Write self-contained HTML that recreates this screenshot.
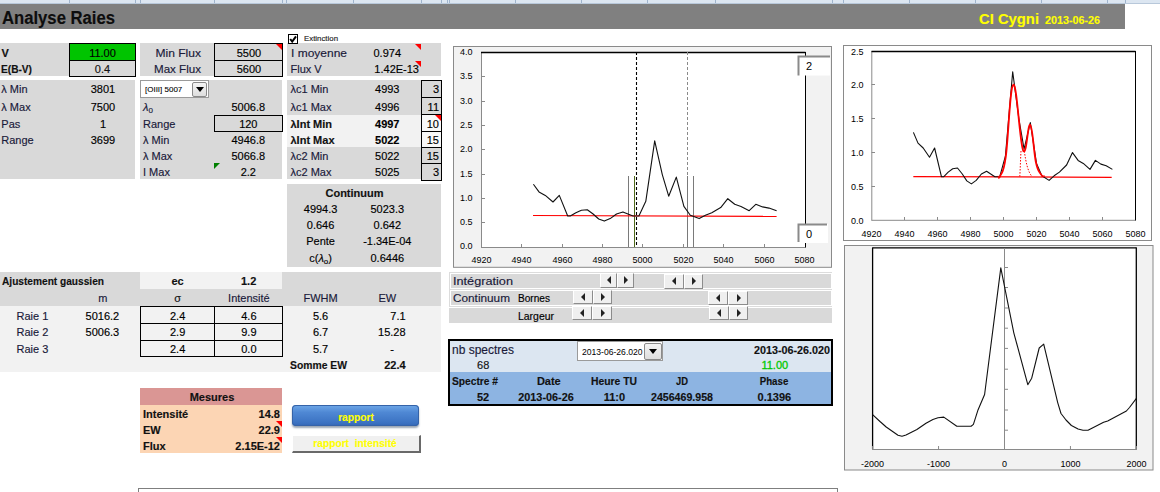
<!DOCTYPE html>
<html><head><meta charset="utf-8"><style>
html,body{margin:0;padding:0;}
body{width:1160px;height:492px;overflow:hidden;background:#fff;position:relative;font-family:"Liberation Sans",sans-serif;}
.a{position:absolute;}
.t{position:absolute;white-space:nowrap;line-height:1;-webkit-text-stroke:0.15px currentColor;}
</style></head><body>
<div class="a" style="left:0px;top:0px;width:1160px;height:4px;background:#dce6f1;"></div>
<div class="a" style="left:69px;top:0px;width:1px;height:4px;background:#9fb4cc;"></div>
<div class="a" style="left:135px;top:0px;width:1px;height:4px;background:#9fb4cc;"></div>
<div class="a" style="left:140px;top:0px;width:1px;height:4px;background:#9fb4cc;"></div>
<div class="a" style="left:214px;top:0px;width:1px;height:4px;background:#9fb4cc;"></div>
<div class="a" style="left:282px;top:0px;width:1px;height:4px;background:#9fb4cc;"></div>
<div class="a" style="left:286px;top:0px;width:1px;height:4px;background:#9fb4cc;"></div>
<div class="a" style="left:353px;top:0px;width:1px;height:4px;background:#9fb4cc;"></div>
<div class="a" style="left:421px;top:0px;width:1px;height:4px;background:#9fb4cc;"></div>
<div class="a" style="left:441px;top:0px;width:1px;height:4px;background:#9fb4cc;"></div>
<div class="a" style="left:447px;top:0px;width:1px;height:4px;background:#9fb4cc;"></div>
<div class="a" style="left:449px;top:0px;width:1px;height:4px;background:#9fb4cc;"></div>
<div class="a" style="left:515px;top:0px;width:1px;height:4px;background:#9fb4cc;"></div>
<div class="a" style="left:581px;top:0px;width:1px;height:4px;background:#9fb4cc;"></div>
<div class="a" style="left:647px;top:0px;width:1px;height:4px;background:#9fb4cc;"></div>
<div class="a" style="left:715px;top:0px;width:1px;height:4px;background:#9fb4cc;"></div>
<div class="a" style="left:832px;top:0px;width:1px;height:4px;background:#9fb4cc;"></div>
<div class="a" style="left:843px;top:0px;width:1px;height:4px;background:#9fb4cc;"></div>
<div class="a" style="left:909px;top:0px;width:1px;height:4px;background:#9fb4cc;"></div>
<div class="a" style="left:975px;top:0px;width:1px;height:4px;background:#9fb4cc;"></div>
<div class="a" style="left:1041px;top:0px;width:1px;height:4px;background:#9fb4cc;"></div>
<div class="a" style="left:1107px;top:0px;width:1px;height:4px;background:#9fb4cc;"></div>
<div class="a" style="left:1125px;top:0px;width:1px;height:4px;background:#9fb4cc;"></div>
<div class="a" style="left:0px;top:3px;width:1160px;height:1px;background:#b8c8da;"></div>
<div class="a" style="left:0px;top:4px;width:1125px;height:25px;background:#808080;"></div>
<div class="t" style="left:2.00px;top:9.16px;font-size:18px;font-weight:bold;color:#0d0d0d;transform:scaleX(0.9257);transform-origin:left top;">Analyse Raies</div>
<div class="t" style="left:978.50px;top:10.58px;font-size:15.5px;font-weight:bold;color:#ffff00;transform:scaleX(0.9545);transform-origin:left top;">CI Cygni</div>
<div class="t" style="left:1044.80px;top:14.69px;font-size:11px;font-weight:bold;color:#ffff00;transform:scaleX(0.9774);transform-origin:left top;">2013-06-26</div>
<div class="a" style="left:0px;top:43px;width:69px;height:33px;background:#d9d9d9;"></div>
<div class="t" style="left:1.50px;top:48.39px;font-size:11px;font-weight:bold;color:#111;">V</div>
<div class="t" style="left:1.20px;top:64.29px;font-size:11px;font-weight:bold;color:#111;transform:scaleX(0.9224);transform-origin:left top;">E(B-V)</div>
<div class="a" style="left:69px;top:43px;width:67px;height:18px;background:#00c400;box-shadow:inset 0 0 0 1px #000;"></div>
<div class="a" style="left:69px;top:60px;width:67px;height:17px;background:#d9d9d9;box-shadow:inset 0 0 0 1px #000;"></div>
<div class="t" style="left:-197.50px;width:600px;text-align:center;top:48.29px;font-size:11px;color:#000;">11.00</div>
<div class="t" style="left:-197.50px;width:600px;text-align:center;top:64.19px;font-size:11px;color:#111;">0.4</div>
<div class="a" style="left:140px;top:43px;width:143px;height:33px;background:#d9d9d9;"></div>
<div class="t" style="left:-399.20px;width:600px;text-align:right;top:48.29px;font-size:11px;color:#1a1a3a;transform:scaleX(1.0971);transform-origin:right top;">Min Flux</div>
<div class="t" style="left:-399.20px;width:600px;text-align:right;top:64.19px;font-size:11px;color:#1a1a3a;transform:scaleX(1.0534);transform-origin:right top;">Max Flux</div>
<div class="a" style="left:214px;top:43px;width:69px;height:18px;background:#d9d9d9;box-shadow:inset 0 0 0 1px #000;"></div>
<div class="a" style="left:214px;top:60px;width:69px;height:17px;background:#d9d9d9;box-shadow:inset 0 0 0 1px #000;"></div>
<div class="t" style="left:-51.10px;width:600px;text-align:center;top:48.29px;font-size:11px;color:#000;">5500</div>
<div class="t" style="left:-51.10px;width:600px;text-align:center;top:64.19px;font-size:11px;color:#000;">5600</div>
<div class="a" style="left:276px;top:44px;width:0;height:0;border-left:6px solid transparent;border-top:6px solid #ff0000;"></div>
<div class="a" style="left:287px;top:43px;width:154px;height:33px;background:#d9d9d9;"></div>
<div class="a" style="left:288px;top:34px;width:10px;height:10px;background:#fff;box-shadow:inset 0 0 0 1px #000;"></div>
<svg class="a" style="left:288px;top:34px" width="10" height="10"><path d="M2.2 5.0 L4.2 7.6 L8 2.4" stroke="#000" stroke-width="2" fill="none"/></svg>
<div class="t" style="left:304.00px;top:35.03px;font-size:8px;color:#222;transform:scaleX(0.9803);transform-origin:left top;">Extinction</div>
<div class="t" style="left:290.50px;top:48.09px;font-size:11px;color:#1a1a3a;transform:scaleX(1.0902);transform-origin:left top;">I moyenne</div>
<div class="t" style="left:290.50px;top:64.19px;font-size:11px;color:#1a1a3a;">Flux V</div>
<div class="t" style="left:-199.00px;width:600px;text-align:right;top:48.09px;font-size:11px;color:#000;">0.974</div>
<div class="t" style="left:-181.00px;width:600px;text-align:right;top:64.19px;font-size:11px;color:#000;">1.42E-13</div>
<div class="a" style="left:415px;top:44px;width:0;height:0;border-left:6px solid transparent;border-top:6px solid #ff0000;"></div>
<div class="a" style="left:415px;top:61px;width:0;height:0;border-left:6px solid transparent;border-top:6px solid #ff0000;"></div>
<div class="a" style="left:0px;top:80px;width:135px;height:99px;background:#d9d9d9;"></div>
<div class="t" style="left:1.30px;top:84.49px;font-size:11px;color:#1a1a3a;">&lambda; Min</div>
<div class="t" style="left:1.30px;top:102.29px;font-size:11px;color:#1a1a3a;">&lambda; Max</div>
<div class="t" style="left:1.30px;top:119.29px;font-size:11px;color:#1a1a3a;">Pas</div>
<div class="t" style="left:1.30px;top:135.29px;font-size:11px;color:#1a1a3a;">Range</div>
<div class="t" style="left:-197.00px;width:600px;text-align:center;top:84.49px;font-size:11px;color:#000;">3801</div>
<div class="t" style="left:-197.00px;width:600px;text-align:center;top:102.29px;font-size:11px;color:#000;">7500</div>
<div class="t" style="left:-197.00px;width:600px;text-align:center;top:119.29px;font-size:11px;color:#000;">1</div>
<div class="t" style="left:-197.00px;width:600px;text-align:center;top:135.29px;font-size:11px;color:#000;">3699</div>
<div class="a" style="left:140px;top:80px;width:142px;height:99px;background:#d9d9d9;"></div>
<div class="a" style="left:140px;top:80px;width:69px;height:18px;background:#fff;box-shadow:inset 0 0 0 1px #9a9a9a;"></div>
<div class="t" style="left:144.60px;top:86.13px;font-size:8px;color:#000;transform:scaleX(0.9985);transform-origin:left top;-webkit-text-stroke:0.1px #000;">[OIII] 5007</div>
<div class="a" style="left:192px;top:81.5px;width:15px;height:15px;background:linear-gradient(#f4f4f4,#dedede);border:1px solid #8a8a8a;border-radius:2px;box-sizing:border-box;"></div>
<div class="a" style="left:196px;top:87px;width:0;height:0;border-left:4px solid transparent;border-right:4px solid transparent;border-top:5px solid #000;"></div>
<div class="t" style="left:143.00px;top:102.29px;font-size:11px;color:#1a1a3a;"><i>&lambda;</i><sub style="font-size:8px;vertical-align:-2px">0</sub></div>
<div class="t" style="left:143.00px;top:119.29px;font-size:11px;color:#1a1a3a;">Range</div>
<div class="t" style="left:143.00px;top:135.29px;font-size:11px;color:#1a1a3a;">&lambda; Min</div>
<div class="t" style="left:143.00px;top:150.79px;font-size:11px;color:#1a1a3a;">&lambda; Max</div>
<div class="t" style="left:143.00px;top:167.09px;font-size:11px;color:#1a1a3a;">I Max</div>
<div class="t" style="left:-51.70px;width:600px;text-align:center;top:102.29px;font-size:11px;color:#000;">5006.8</div>
<div class="a" style="left:214px;top:115px;width:69px;height:17px;background:#d9d9d9;box-shadow:inset 0 0 0 1px #000;"></div>
<div class="t" style="left:-51.70px;width:600px;text-align:center;top:119.29px;font-size:11px;color:#000;">120</div>
<div class="t" style="left:-51.70px;width:600px;text-align:center;top:135.29px;font-size:11px;color:#000;">4946.8</div>
<div class="t" style="left:-51.70px;width:600px;text-align:center;top:150.79px;font-size:11px;color:#000;">5066.8</div>
<div class="t" style="left:-51.70px;width:600px;text-align:center;top:167.09px;font-size:11px;color:#000;">2.2</div>
<div class="a" style="left:214px;top:163px;width:0;height:0;border-right:6px solid transparent;border-top:6px solid #008000;"></div>
<div class="a" style="left:287px;top:80px;width:155px;height:99px;background:#d9d9d9;"></div>
<div class="a" style="left:287px;top:115px;width:134px;height:32px;background:#f2f2f2;"></div>
<div class="t" style="left:290.50px;top:84.49px;font-size:11px;color:#1a1a3a;">&lambda;c1 Min</div>
<div class="t" style="left:-200.50px;width:600px;text-align:right;top:84.49px;font-size:11px;color:#000;">4993</div>
<div class="a" style="left:421px;top:80px;width:21px;height:18px;background:#d9d9d9;box-shadow:inset 0 0 0 1px #000;"></div>
<div class="t" style="left:-161.00px;width:600px;text-align:right;top:84.49px;font-size:11px;color:#000;">3</div>
<div class="t" style="left:290.50px;top:102.29px;font-size:11px;color:#1a1a3a;">&lambda;c1 Max</div>
<div class="t" style="left:-200.50px;width:600px;text-align:right;top:102.29px;font-size:11px;color:#000;">4996</div>
<div class="a" style="left:421px;top:97px;width:21px;height:18px;background:#d9d9d9;box-shadow:inset 0 0 0 1px #000;"></div>
<div class="t" style="left:-161.00px;width:600px;text-align:right;top:102.29px;font-size:11px;color:#000;">11</div>
<div class="t" style="left:290.50px;top:119.29px;font-size:11px;font-weight:bold;color:#111;">&lambda;Int Min</div>
<div class="t" style="left:-200.50px;width:600px;text-align:right;top:119.29px;font-size:11px;font-weight:bold;color:#000;">4997</div>
<div class="a" style="left:421px;top:114px;width:21px;height:18px;background:#f8f8f8;box-shadow:inset 0 0 0 1px #000;"></div>
<div class="t" style="left:-161.00px;width:600px;text-align:right;top:119.29px;font-size:11px;color:#000;">10</div>
<div class="t" style="left:290.50px;top:135.29px;font-size:11px;font-weight:bold;color:#111;">&lambda;Int Max</div>
<div class="t" style="left:-200.50px;width:600px;text-align:right;top:135.29px;font-size:11px;font-weight:bold;color:#000;">5022</div>
<div class="a" style="left:421px;top:131px;width:21px;height:17px;background:#f8f8f8;box-shadow:inset 0 0 0 1px #000;"></div>
<div class="t" style="left:-161.00px;width:600px;text-align:right;top:135.29px;font-size:11px;color:#000;">15</div>
<div class="t" style="left:290.50px;top:150.79px;font-size:11px;color:#1a1a3a;">&lambda;c2 Min</div>
<div class="t" style="left:-200.50px;width:600px;text-align:right;top:150.79px;font-size:11px;color:#000;">5022</div>
<div class="a" style="left:421px;top:147px;width:21px;height:17px;background:#d9d9d9;box-shadow:inset 0 0 0 1px #000;"></div>
<div class="t" style="left:-161.00px;width:600px;text-align:right;top:150.79px;font-size:11px;color:#000;">15</div>
<div class="t" style="left:290.50px;top:167.09px;font-size:11px;color:#1a1a3a;">&lambda;c2 Max</div>
<div class="t" style="left:-200.50px;width:600px;text-align:right;top:167.09px;font-size:11px;color:#000;">5025</div>
<div class="a" style="left:421px;top:163px;width:21px;height:18px;background:#d9d9d9;box-shadow:inset 0 0 0 1px #000;"></div>
<div class="t" style="left:-161.00px;width:600px;text-align:right;top:167.09px;font-size:11px;color:#000;">3</div>
<div class="a" style="left:435px;top:115px;width:0;height:0;border-left:6px solid transparent;border-top:6px solid #ff0000;"></div>
<div class="a" style="left:287px;top:184px;width:154px;height:83px;background:#d9d9d9;"></div>
<div class="t" style="left:54.50px;width:600px;text-align:center;top:187.79px;font-size:11px;font-weight:bold;color:#111;">Continuum</div>
<div class="t" style="left:20.60px;width:600px;text-align:center;top:204.39px;font-size:11px;color:#000;">4994.3</div>
<div class="t" style="left:87.30px;width:600px;text-align:center;top:204.39px;font-size:11px;color:#000;">5023.3</div>
<div class="t" style="left:20.60px;width:600px;text-align:center;top:220.09px;font-size:11px;color:#000;">0.646</div>
<div class="t" style="left:87.30px;width:600px;text-align:center;top:220.09px;font-size:11px;color:#000;">0.642</div>
<div class="t" style="left:20.60px;width:600px;text-align:center;top:236.09px;font-size:11px;color:#000;">Pente</div>
<div class="t" style="left:87.30px;width:600px;text-align:center;top:236.09px;font-size:11px;color:#000;">-1.34E-04</div>
<div class="t" style="left:20.60px;width:600px;text-align:center;top:253.09px;font-size:11px;color:#000;">c(<i>&lambda;</i><sub style="font-size:8px;vertical-align:-2px">o</sub>)</div>
<div class="t" style="left:87.30px;width:600px;text-align:center;top:253.09px;font-size:11px;color:#000;">0.6446</div>
<div class="a" style="left:0px;top:272px;width:441px;height:100px;background:#f2f2f2;"></div>
<div class="a" style="left:0px;top:272px;width:140px;height:17px;background:#d9d9d9;"></div>
<div class="a" style="left:282px;top:272px;width:159px;height:17px;background:#d9d9d9;"></div>
<div class="a" style="left:0px;top:289px;width:441px;height:17px;background:#d9d9d9;"></div>
<div class="t" style="left:1.50px;top:276.49px;font-size:11px;font-weight:bold;color:#111;transform:scaleX(0.9219);transform-origin:left top;">Ajustement gaussien</div>
<div class="t" style="left:-122.40px;width:600px;text-align:center;top:276.49px;font-size:11px;font-weight:bold;color:#111;">ec</div>
<div class="t" style="left:-51.40px;width:600px;text-align:center;top:276.49px;font-size:11px;font-weight:bold;color:#111;">1.2</div>
<div class="t" style="left:-197.10px;width:600px;text-align:center;top:293.49px;font-size:11px;color:#1a1a3a;">m</div>
<div class="t" style="left:-122.40px;width:600px;text-align:center;top:293.49px;font-size:11px;color:#111;">&sigma;</div>
<div class="t" style="left:-51.10px;width:600px;text-align:center;top:293.49px;font-size:11px;color:#1a1a3a;">Intensit&eacute;</div>
<div class="t" style="left:20.60px;width:600px;text-align:center;top:293.49px;font-size:11px;color:#1a1a3a;">FWHM</div>
<div class="t" style="left:87.40px;width:600px;text-align:center;top:293.49px;font-size:11px;color:#1a1a3a;">EW</div>
<div class="t" style="left:16.50px;top:310.79px;font-size:11px;color:#1a1a3a;">Raie 1</div>
<div class="t" style="left:-197.60px;width:600px;text-align:center;top:310.79px;font-size:11px;color:#000;">5016.2</div>
<div class="a" style="left:140px;top:306px;width:75px;height:18px;box-shadow:inset 0 0 0 1px #000;"></div>
<div class="a" style="left:214px;top:306px;width:69px;height:18px;box-shadow:inset 0 0 0 1px #000;"></div>
<div class="t" style="left:-122.40px;width:600px;text-align:center;top:310.79px;font-size:11px;color:#000;">2.4</div>
<div class="t" style="left:-51.10px;width:600px;text-align:center;top:310.79px;font-size:11px;color:#000;">4.6</div>
<div class="t" style="left:20.60px;width:600px;text-align:center;top:310.79px;font-size:11px;color:#000;">5.6</div>
<div class="t" style="left:-194.40px;width:600px;text-align:right;top:310.79px;font-size:11px;color:#000;">7.1</div>
<div class="t" style="left:16.50px;top:327.39px;font-size:11px;color:#1a1a3a;">Raie 2</div>
<div class="t" style="left:-197.60px;width:600px;text-align:center;top:327.39px;font-size:11px;color:#000;">5006.3</div>
<div class="a" style="left:140px;top:323px;width:75px;height:18px;box-shadow:inset 0 0 0 1px #000;"></div>
<div class="a" style="left:214px;top:323px;width:69px;height:18px;box-shadow:inset 0 0 0 1px #000;"></div>
<div class="t" style="left:-122.40px;width:600px;text-align:center;top:327.39px;font-size:11px;color:#000;">2.9</div>
<div class="t" style="left:-51.10px;width:600px;text-align:center;top:327.39px;font-size:11px;color:#000;">9.9</div>
<div class="t" style="left:20.60px;width:600px;text-align:center;top:327.39px;font-size:11px;color:#000;">6.7</div>
<div class="t" style="left:-194.40px;width:600px;text-align:right;top:327.39px;font-size:11px;color:#000;">15.28</div>
<div class="t" style="left:16.50px;top:343.99px;font-size:11px;color:#1a1a3a;">Raie 3</div>
<div class="a" style="left:140px;top:340px;width:75px;height:17px;box-shadow:inset 0 0 0 1px #000;"></div>
<div class="a" style="left:214px;top:340px;width:69px;height:17px;box-shadow:inset 0 0 0 1px #000;"></div>
<div class="t" style="left:-122.40px;width:600px;text-align:center;top:343.99px;font-size:11px;color:#000;">2.4</div>
<div class="t" style="left:-51.10px;width:600px;text-align:center;top:343.99px;font-size:11px;color:#000;">0.0</div>
<div class="t" style="left:20.60px;width:600px;text-align:center;top:343.99px;font-size:11px;color:#000;">5.7</div>
<div class="t" style="left:92.00px;width:600px;text-align:center;top:343.99px;font-size:11px;color:#000;">-</div>
<div class="t" style="left:290.00px;top:360.29px;font-size:11px;font-weight:bold;color:#111;transform:scaleX(0.9420);transform-origin:left top;">Somme EW</div>
<div class="t" style="left:-194.40px;width:600px;text-align:right;top:360.29px;font-size:11px;font-weight:bold;color:#111;">22.4</div>
<div class="a" style="left:140px;top:388px;width:142px;height:17px;background:#da9694;"></div>
<div class="a" style="left:140px;top:405px;width:142px;height:48px;background:#fcd5b4;"></div>
<div class="t" style="left:-88.00px;width:600px;text-align:center;top:392.39px;font-size:11px;font-weight:bold;color:#111;">Mesures</div>
<div class="t" style="left:143.00px;top:408.99px;font-size:11px;font-weight:bold;color:#111;">Intensit&eacute;</div>
<div class="t" style="left:143.00px;top:424.79px;font-size:11px;font-weight:bold;color:#111;">EW</div>
<div class="t" style="left:143.00px;top:440.79px;font-size:11px;font-weight:bold;color:#111;">Flux</div>
<div class="t" style="left:-320.00px;width:600px;text-align:right;top:408.99px;font-size:11px;font-weight:bold;color:#111;">14.8</div>
<div class="t" style="left:-320.00px;width:600px;text-align:right;top:424.79px;font-size:11px;font-weight:bold;color:#111;">22.9</div>
<div class="t" style="left:-320.00px;width:600px;text-align:right;top:440.79px;font-size:11px;font-weight:bold;color:#111;">2.15E-12</div>
<div class="a" style="left:276px;top:421px;width:0;height:0;border-left:6px solid transparent;border-top:6px solid #ff0000;"></div>
<div class="a" style="left:276px;top:437px;width:0;height:0;border-left:6px solid transparent;border-top:6px solid #ff0000;"></div>
<div class="a" style="left:292px;top:405px;width:127px;height:21px;border-radius:4px;background:linear-gradient(#6fa8e8 0%,#4f88d4 35%,#3b72c2 85%,#3366b4 100%);box-shadow:inset 0 0 0 1px #3563a8, 0 2px 2px #9aa6b4;"></div>
<div class="t" style="left:55.90px;width:600px;text-align:center;top:411.99px;font-size:11px;font-weight:bold;color:#ffff00;transform:scaleX(0.9273);transform-origin:center top;">rapport</div>
<div class="a" style="left:292px;top:435px;width:128.5px;height:18px;background:#f0f0f0;box-sizing:border-box;border-top:1px solid #fff;border-left:1px solid #fff;border-right:2px solid #696969;border-bottom:2px solid #696969;"></div>
<div class="t" style="left:55.40px;width:600px;text-align:center;top:437.89px;font-size:11px;font-weight:bold;color:#ffff00;transform:scaleX(0.9305);transform-origin:center top;">rapport&nbsp; intensit&eacute;</div>
<div class="a" style="left:138px;top:488px;width:700px;height:4px;box-shadow:inset 0 0 0 1px #7f7f7f;height:10px;"></div>
<div class="a" style="left:449px;top:272px;width:383px;height:1px;background:#dcdcdc;"></div>
<div class="a" style="left:449px;top:289px;width:383px;height:1px;background:#dcdcdc;"></div>
<div class="a" style="left:449px;top:306px;width:383px;height:1px;background:#dcdcdc;"></div>
<div class="a" style="left:449px;top:272px;width:1px;height:35px;background:#dcdcdc;"></div>
<div class="a" style="left:451px;top:274px;width:380px;height:14px;background:#d9d9d9;"></div>
<div class="a" style="left:451px;top:291px;width:380px;height:14px;background:#d9d9d9;"></div>
<div class="a" style="left:449px;top:308px;width:383px;height:15px;background:#d9d9d9;"></div>
<div class="t" style="left:452.60px;top:276.33px;font-size:11.3px;color:#1a1a3a;transform:scaleX(1.1236);transform-origin:left top;">Int&eacute;gration</div>
<div class="t" style="left:452.60px;top:292.83px;font-size:11.3px;color:#1a1a3a;transform:scaleX(1.0430);transform-origin:left top;">Continuum</div>
<div class="t" style="left:518.40px;top:294.13px;font-size:10px;color:#000;transform:scaleX(1.0099);transform-origin:left top;">Bornes</div>
<div class="t" style="left:518.40px;top:312.24px;font-size:10px;color:#000;transform:scaleX(1.0444);transform-origin:left top;">Largeur</div>
<div class="a" style="left:600.0px;top:272.5px;width:17.0px;height:15.5px;box-sizing:border-box;background:#efefef;border-top:1px solid #fff;border-left:1px solid #fff;border-right:1px solid #8c8c8c;border-bottom:1px solid #8c8c8c;"></div>
<div class="a" style="left:606.5px;top:276.2px;width:0;height:0;border-top:4px solid transparent;border-bottom:4px solid transparent;border-right:4px solid #222;"></div>
<div class="a" style="left:617.0px;top:272.5px;width:17.0px;height:15.5px;box-sizing:border-box;background:#efefef;border-top:1px solid #fff;border-left:1px solid #fff;border-right:1px solid #8c8c8c;border-bottom:1px solid #8c8c8c;"></div>
<div class="a" style="left:624.0px;top:276.2px;width:0;height:0;border-top:4px solid transparent;border-bottom:4px solid transparent;border-left:4px solid #222;"></div>
<div class="a" style="left:664.0px;top:273.5px;width:19.5px;height:15.0px;box-sizing:border-box;background:#efefef;border-top:1px solid #fff;border-left:1px solid #fff;border-right:1px solid #8c8c8c;border-bottom:1px solid #8c8c8c;"></div>
<div class="a" style="left:671.8px;top:277.0px;width:0;height:0;border-top:4px solid transparent;border-bottom:4px solid transparent;border-right:4px solid #222;"></div>
<div class="a" style="left:683.5px;top:273.5px;width:19.5px;height:15.0px;box-sizing:border-box;background:#efefef;border-top:1px solid #fff;border-left:1px solid #fff;border-right:1px solid #8c8c8c;border-bottom:1px solid #8c8c8c;"></div>
<div class="a" style="left:691.8px;top:277.0px;width:0;height:0;border-top:4px solid transparent;border-bottom:4px solid transparent;border-left:4px solid #222;"></div>
<div class="a" style="left:573.0px;top:290px;width:19.5px;height:14px;box-sizing:border-box;background:#efefef;border-top:1px solid #fff;border-left:1px solid #fff;border-right:1px solid #8c8c8c;border-bottom:1px solid #8c8c8c;"></div>
<div class="a" style="left:580.8px;top:293.0px;width:0;height:0;border-top:4px solid transparent;border-bottom:4px solid transparent;border-right:4px solid #222;"></div>
<div class="a" style="left:592.5px;top:290px;width:19.5px;height:14px;box-sizing:border-box;background:#efefef;border-top:1px solid #fff;border-left:1px solid #fff;border-right:1px solid #8c8c8c;border-bottom:1px solid #8c8c8c;"></div>
<div class="a" style="left:600.8px;top:293.0px;width:0;height:0;border-top:4px solid transparent;border-bottom:4px solid transparent;border-left:4px solid #222;"></div>
<div class="a" style="left:708.0px;top:291px;width:20.0px;height:14px;box-sizing:border-box;background:#efefef;border-top:1px solid #fff;border-left:1px solid #fff;border-right:1px solid #8c8c8c;border-bottom:1px solid #8c8c8c;"></div>
<div class="a" style="left:716.0px;top:294.0px;width:0;height:0;border-top:4px solid transparent;border-bottom:4px solid transparent;border-right:4px solid #222;"></div>
<div class="a" style="left:728.0px;top:291px;width:20.0px;height:14px;box-sizing:border-box;background:#efefef;border-top:1px solid #fff;border-left:1px solid #fff;border-right:1px solid #8c8c8c;border-bottom:1px solid #8c8c8c;"></div>
<div class="a" style="left:736.5px;top:294.0px;width:0;height:0;border-top:4px solid transparent;border-bottom:4px solid transparent;border-left:4px solid #222;"></div>
<div class="a" style="left:572.0px;top:306px;width:20.0px;height:14px;box-sizing:border-box;background:#efefef;border-top:1px solid #fff;border-left:1px solid #fff;border-right:1px solid #8c8c8c;border-bottom:1px solid #8c8c8c;"></div>
<div class="a" style="left:580.0px;top:309.0px;width:0;height:0;border-top:4px solid transparent;border-bottom:4px solid transparent;border-right:4px solid #222;"></div>
<div class="a" style="left:592.0px;top:306px;width:20.0px;height:14px;box-sizing:border-box;background:#efefef;border-top:1px solid #fff;border-left:1px solid #fff;border-right:1px solid #8c8c8c;border-bottom:1px solid #8c8c8c;"></div>
<div class="a" style="left:600.5px;top:309.0px;width:0;height:0;border-top:4px solid transparent;border-bottom:4px solid transparent;border-left:4px solid #222;"></div>
<div class="a" style="left:709.0px;top:306px;width:19.5px;height:14px;box-sizing:border-box;background:#efefef;border-top:1px solid #fff;border-left:1px solid #fff;border-right:1px solid #8c8c8c;border-bottom:1px solid #8c8c8c;"></div>
<div class="a" style="left:716.8px;top:309.0px;width:0;height:0;border-top:4px solid transparent;border-bottom:4px solid transparent;border-right:4px solid #222;"></div>
<div class="a" style="left:728.5px;top:306px;width:19.5px;height:14px;box-sizing:border-box;background:#efefef;border-top:1px solid #fff;border-left:1px solid #fff;border-right:1px solid #8c8c8c;border-bottom:1px solid #8c8c8c;"></div>
<div class="a" style="left:736.8px;top:309.0px;width:0;height:0;border-top:4px solid transparent;border-bottom:4px solid transparent;border-left:4px solid #222;"></div>
<div class="a" style="left:448px;top:339px;width:385px;height:67px;background:#000;"></div>
<div class="a" style="left:450px;top:341px;width:381px;height:31px;background:#dce6f1;"></div>
<div class="a" style="left:450px;top:372px;width:381px;height:32px;background:#8db4e2;"></div>
<div class="t" style="left:451.70px;top:343.54px;font-size:12px;color:#1a1a3a;transform:scaleX(0.9994);transform-origin:left top;">nb spectres</div>
<div class="t" style="left:183.20px;width:600px;text-align:center;top:359.89px;font-size:11px;color:#111;">68</div>
<div class="t" style="left:451.70px;top:376.49px;font-size:11px;font-weight:bold;color:#111;transform:scaleX(0.9288);transform-origin:left top;">Spectre #</div>
<div class="t" style="left:183.00px;width:600px;text-align:center;top:392.39px;font-size:11px;font-weight:bold;color:#111;">52</div>
<div class="t" style="left:248.80px;width:600px;text-align:center;top:376.49px;font-size:11px;font-weight:bold;color:#111;">Date</div>
<div class="t" style="left:245.90px;width:600px;text-align:center;top:392.39px;font-size:11px;font-weight:bold;color:#111;transform:scaleX(0.9863);transform-origin:center top;">2013-06-26</div>
<div class="t" style="left:314.10px;width:600px;text-align:center;top:376.49px;font-size:11px;font-weight:bold;color:#111;transform:scaleX(0.9407);transform-origin:center top;">Heure TU</div>
<div class="t" style="left:314.40px;width:600px;text-align:center;top:392.39px;font-size:11px;font-weight:bold;color:#111;">11:0</div>
<div class="t" style="left:381.70px;width:600px;text-align:center;top:376.49px;font-size:11px;font-weight:bold;color:#111;transform:scaleX(0.8534);transform-origin:center top;">JD</div>
<div class="t" style="left:381.70px;width:600px;text-align:center;top:392.39px;font-size:11px;font-weight:bold;color:#111;transform:scaleX(0.9652);transform-origin:center top;">2456469.958</div>
<div class="t" style="left:474.40px;width:600px;text-align:center;top:376.49px;font-size:11px;font-weight:bold;color:#111;transform:scaleX(0.8824);transform-origin:center top;">Phase</div>
<div class="t" style="left:474.40px;width:600px;text-align:center;top:392.39px;font-size:11px;font-weight:bold;color:#111;">0.1396</div>
<div class="t" style="left:229.50px;width:600px;text-align:right;top:344.89px;font-size:11px;font-weight:bold;color:#111;transform:scaleX(0.9784);transform-origin:right top;">2013-06-26.020</div>
<div class="t" style="left:474.80px;width:600px;text-align:center;top:359.99px;font-size:11px;color:#00c800;-webkit-text-stroke:0.3px #00c800;">11.00</div>
<div class="a" style="left:577px;top:341px;width:86px;height:20px;background:#fff;box-shadow:inset 0 0 0 1px #9a9a9a;"></div>
<div class="t" style="left:581.60px;top:348.48px;font-size:9px;color:#000;transform:scaleX(0.9535);transform-origin:left top;-webkit-text-stroke:0;">2013-06-26.020</div>
<div class="a" style="left:644px;top:342.5px;width:18px;height:17px;background:linear-gradient(#f4f4f4,#dedede);border:1px solid #8a8a8a;border-radius:2px;box-sizing:border-box;"></div>
<div class="a" style="left:649px;top:348.5px;width:0;height:0;border-left:4px solid transparent;border-right:4px solid transparent;border-top:5px solid #000;"></div>
<svg class="a" style="left:0;top:0" width="1160" height="492" font-family="Liberation Sans, sans-serif"><rect x="453.5" y="46.5" width="378" height="220.8" fill="#f2f2f2" stroke="#8a8a8a" stroke-width="1"/><rect x="481.5" y="52.5" width="323.5" height="194.5" fill="#fff"/><text x="472.5" y="249.4" font-size="9" text-anchor="end" fill="#000" font-weight="normal">0.0</text><line x1="481.5" y1="222.5" x2="485" y2="222.5" stroke="#8a8a8a" stroke-width="1" /><text x="472.5" y="225.1" font-size="9" text-anchor="end" fill="#000" font-weight="normal">0.5</text><line x1="481.5" y1="198.5" x2="485" y2="198.5" stroke="#8a8a8a" stroke-width="1" /><text x="472.5" y="200.8" font-size="9" text-anchor="end" fill="#000" font-weight="normal">1.0</text><line x1="481.5" y1="174.5" x2="485" y2="174.5" stroke="#8a8a8a" stroke-width="1" /><text x="472.5" y="176.5" font-size="9" text-anchor="end" fill="#000" font-weight="normal">1.5</text><line x1="481.5" y1="149.5" x2="485" y2="149.5" stroke="#8a8a8a" stroke-width="1" /><text x="472.5" y="152.2" font-size="9" text-anchor="end" fill="#000" font-weight="normal">2.0</text><line x1="481.5" y1="125.5" x2="485" y2="125.5" stroke="#8a8a8a" stroke-width="1" /><text x="472.5" y="127.9" font-size="9" text-anchor="end" fill="#000" font-weight="normal">2.5</text><line x1="481.5" y1="101.5" x2="485" y2="101.5" stroke="#8a8a8a" stroke-width="1" /><text x="472.5" y="103.6" font-size="9" text-anchor="end" fill="#000" font-weight="normal">3.0</text><line x1="481.5" y1="76.5" x2="485" y2="76.5" stroke="#8a8a8a" stroke-width="1" /><text x="472.5" y="79.3" font-size="9" text-anchor="end" fill="#000" font-weight="normal">3.5</text><text x="472.5" y="55.0" font-size="9" text-anchor="end" fill="#000" font-weight="normal">4.0</text><text x="481.5" y="263.2" font-size="9" text-anchor="middle" fill="#000" font-weight="normal">4920</text><line x1="521.5" y1="244" x2="521.5" y2="247" stroke="#8a8a8a" stroke-width="1" /><text x="521.5" y="263.2" font-size="9" text-anchor="middle" fill="#000" font-weight="normal">4940</text><line x1="562.5" y1="244" x2="562.5" y2="247" stroke="#8a8a8a" stroke-width="1" /><text x="562.5" y="263.2" font-size="9" text-anchor="middle" fill="#000" font-weight="normal">4960</text><line x1="602.5" y1="244" x2="602.5" y2="247" stroke="#8a8a8a" stroke-width="1" /><text x="602.5" y="263.2" font-size="9" text-anchor="middle" fill="#000" font-weight="normal">4980</text><line x1="642.5" y1="244" x2="642.5" y2="247" stroke="#8a8a8a" stroke-width="1" /><text x="642.5" y="263.2" font-size="9" text-anchor="middle" fill="#000" font-weight="normal">5000</text><line x1="683.5" y1="244" x2="683.5" y2="247" stroke="#8a8a8a" stroke-width="1" /><text x="683.5" y="263.2" font-size="9" text-anchor="middle" fill="#000" font-weight="normal">5020</text><line x1="723.5" y1="244" x2="723.5" y2="247" stroke="#8a8a8a" stroke-width="1" /><text x="723.5" y="263.2" font-size="9" text-anchor="middle" fill="#000" font-weight="normal">5040</text><line x1="764.5" y1="244" x2="764.5" y2="247" stroke="#8a8a8a" stroke-width="1" /><text x="764.5" y="263.2" font-size="9" text-anchor="middle" fill="#000" font-weight="normal">5060</text><text x="804.5" y="263.2" font-size="9" text-anchor="middle" fill="#000" font-weight="normal">5080</text><line x1="481.5" y1="52" x2="481.5" y2="247.5" stroke="#8a8a8a" stroke-width="1" /><line x1="481" y1="247.5" x2="805.5" y2="247.5" stroke="#8a8a8a" stroke-width="1" /><line x1="481" y1="52.5" x2="805.5" y2="52.5" stroke="#000" stroke-width="1.3" /><line x1="805.5" y1="52" x2="805.5" y2="224" stroke="#000" stroke-width="1" /><line x1="628.5" y1="176" x2="628.5" y2="247" stroke="#7a7a7a" stroke-width="1" /><line x1="634.5" y1="176" x2="634.5" y2="247" stroke="#4f6a1a" stroke-width="1" /><line x1="636.5" y1="52" x2="636.5" y2="247" stroke="#000" stroke-width="1.1" stroke-dasharray="3,2"/><line x1="687.5" y1="52" x2="687.5" y2="176" stroke="#8a8a8a" stroke-width="1" stroke-dasharray="3,2"/><line x1="687.5" y1="176" x2="687.5" y2="247" stroke="#7a7a7a" stroke-width="1" /><line x1="693.5" y1="176" x2="693.5" y2="247" stroke="#7a7a7a" stroke-width="1" /><line x1="533" y1="215.5" x2="776.6" y2="216.4" stroke="#ff0000" stroke-width="1.1" /><polyline points="533.4,184.2 539.0,191.9 545.3,195.4 553.0,202.0 559.3,195.4 567.7,216.0 570.3,216.0 575.9,212.7 581.4,210.2 587.3,209.7 593.1,214.0 598.7,219.0 604.3,221.1 610.2,218.6 616.5,214.0 622.9,212.0 629.2,214.5 633.0,216.0 638.9,216.0 645.8,201.3 654.7,140.8 662.3,174.6 668.7,196.2 676.3,177.1 683.9,206.4 690.3,215.3 699.2,218.6 705.4,215.3 711.8,212.7 720.7,207.6 727.8,198.7 734.7,204.3 741.0,206.4 749.2,210.7 755.8,204.3 762.6,206.9 769.0,208.1 776.6,210.7" fill="none" stroke="#111" stroke-width="1.1" stroke-linejoin="round" /><rect x="798" y="56" width="32" height="19.5" fill="#fff"/><path d="M798.5 75.5 V56.5 H830" stroke="#8a8a8a" stroke-width="2" fill="none"/><text x="806.0" y="70.0" font-size="11" text-anchor="start" fill="#000" font-weight="normal">2</text><rect x="798" y="224" width="30" height="19" fill="#fff"/><line x1="805.5" y1="243" x2="805.5" y2="247.5" stroke="#000" stroke-width="1" /><path d="M798.5 242 V224.5 H827" stroke="#8a8a8a" stroke-width="2" fill="none"/><text x="806.0" y="237.8" font-size="11" text-anchor="start" fill="#000" font-weight="normal">0</text><rect x="843.5" y="45.5" width="308" height="195" fill="#fff" stroke="#8a8a8a" stroke-width="1"/><text x="863.6" y="224.0" font-size="9" text-anchor="end" fill="#000" font-weight="normal">0.0</text><line x1="871.5" y1="186.5" x2="875" y2="186.5" stroke="#8a8a8a" stroke-width="1" /><text x="863.6" y="190.1" font-size="9" text-anchor="end" fill="#000" font-weight="normal">0.5</text><line x1="871.5" y1="152.5" x2="875" y2="152.5" stroke="#8a8a8a" stroke-width="1" /><text x="863.6" y="156.2" font-size="9" text-anchor="end" fill="#000" font-weight="normal">1.0</text><line x1="871.5" y1="118.5" x2="875" y2="118.5" stroke="#8a8a8a" stroke-width="1" /><text x="863.6" y="122.3" font-size="9" text-anchor="end" fill="#000" font-weight="normal">1.5</text><line x1="871.5" y1="84.5" x2="875" y2="84.5" stroke="#8a8a8a" stroke-width="1" /><text x="863.6" y="88.4" font-size="9" text-anchor="end" fill="#000" font-weight="normal">2.0</text><text x="863.6" y="54.5" font-size="9" text-anchor="end" fill="#000" font-weight="normal">2.5</text><text x="871.5" y="237.2" font-size="9" text-anchor="middle" fill="#000" font-weight="normal">4920</text><line x1="904.5" y1="217" x2="904.5" y2="220" stroke="#8a8a8a" stroke-width="1" /><text x="904.5" y="237.2" font-size="9" text-anchor="middle" fill="#000" font-weight="normal">4940</text><line x1="937.5" y1="217" x2="937.5" y2="220" stroke="#8a8a8a" stroke-width="1" /><text x="937.5" y="237.2" font-size="9" text-anchor="middle" fill="#000" font-weight="normal">4960</text><line x1="970.5" y1="217" x2="970.5" y2="220" stroke="#8a8a8a" stroke-width="1" /><text x="970.5" y="237.2" font-size="9" text-anchor="middle" fill="#000" font-weight="normal">4980</text><line x1="1003.5" y1="217" x2="1003.5" y2="220" stroke="#8a8a8a" stroke-width="1" /><text x="1003.5" y="237.2" font-size="9" text-anchor="middle" fill="#000" font-weight="normal">5000</text><line x1="1036.5" y1="217" x2="1036.5" y2="220" stroke="#8a8a8a" stroke-width="1" /><text x="1036.5" y="237.2" font-size="9" text-anchor="middle" fill="#000" font-weight="normal">5020</text><line x1="1069.5" y1="217" x2="1069.5" y2="220" stroke="#8a8a8a" stroke-width="1" /><text x="1069.5" y="237.2" font-size="9" text-anchor="middle" fill="#000" font-weight="normal">5040</text><line x1="1102.5" y1="217" x2="1102.5" y2="220" stroke="#8a8a8a" stroke-width="1" /><text x="1102.5" y="237.2" font-size="9" text-anchor="middle" fill="#000" font-weight="normal">5060</text><text x="1135.5" y="237.2" font-size="9" text-anchor="middle" fill="#000" font-weight="normal">5080</text><line x1="871.8" y1="51" x2="871.8" y2="220.5" stroke="#8a8a8a" stroke-width="1" /><line x1="871.5" y1="220.3" x2="1135.5" y2="220.3" stroke="#8a8a8a" stroke-width="1" /><line x1="871.5" y1="51.5" x2="1135.5" y2="51.5" stroke="#000" stroke-width="1.3" /><line x1="1135.5" y1="51" x2="1135.5" y2="220.5" stroke="#000" stroke-width="1" /><line x1="913.3" y1="176.6" x2="1111.7" y2="177.3" stroke="#ff0000" stroke-width="1.3" /><polyline points="913.4,132.4 918.0,143.1 923.2,148.0 929.5,157.2 934.6,148.0 941.5,176.8 943.6,176.8 948.2,172.1 952.7,168.7 957.5,168.0 962.3,174.0 966.8,180.9 971.4,183.9 976.2,180.4 981.4,174.0 986.6,171.2 991.8,174.7 994.9,176.8 999.7,176.8 1005.4,156.2 1012.7,71.8 1018.9,119.0 1024.1,149.1 1030.3,122.5 1036.5,163.4 1041.8,175.8 1049.1,180.4 1054.1,175.8 1059.4,172.1 1066.6,165.0 1072.5,152.6 1078.1,160.4 1083.3,163.4 1090.0,169.4 1095.4,160.4 1100.9,164.1 1106.2,165.7 1112.4,169.4" fill="none" stroke="#111" stroke-width="1.1" stroke-linejoin="round" /><path d="M998.0,176.8 C998.4,176.6 998.6,180.0 1000.2,176.0 C1001.8,172.0 1003.2,174.9 1005.8,156.6 C1008.4,138.3 1009.9,86.0 1013.4,84.7 C1016.9,83.4 1019.7,142.3 1023.1,150.3 C1026.5,158.3 1027.7,122.5 1030.2,124.8 C1032.7,127.1 1033.7,151.8 1035.8,161.7 C1037.9,171.6 1039.1,171.4 1040.9,174.4 C1042.7,177.4 1043.9,176.1 1044.7,176.5" fill="none" stroke="#ff0000" stroke-width="1.8" stroke-linejoin="round"/><path d="M1021,151 C1020.5,160 1020.2,170 1019.8,176.5" fill="none" stroke="#ff0000" stroke-width="1" stroke-dasharray="1.5,1.5"/><path d="M1024.3,151 C1026,163 1028,172 1032,176.5" fill="none" stroke="#ff0000" stroke-width="1" stroke-dasharray="1.5,1.5"/><rect x="844.5" y="245.5" width="308.5" height="224.5" fill="#f2f2f2" stroke="#8a8a8a" stroke-width="1"/><rect x="872.5" y="248" width="264" height="201.5" fill="#fff"/><line x1="872.5" y1="247.8" x2="1136.5" y2="247.8" stroke="#000" stroke-width="1.3" /><line x1="872.6" y1="247.5" x2="872.6" y2="449.5" stroke="#000" stroke-width="1.3" /><line x1="1136.3" y1="247.5" x2="1136.3" y2="449.5" stroke="#000" stroke-width="1.3" /><line x1="872" y1="449.5" x2="1137" y2="449.5" stroke="#8a8a8a" stroke-width="1" /><line x1="1004.5" y1="248" x2="1004.5" y2="449.5" stroke="#8a8a8a" stroke-width="1" /><line x1="1004.5" y1="267.5" x2="1008" y2="267.5" stroke="#8a8a8a" stroke-width="1" /><line x1="1004.5" y1="287.5" x2="1008" y2="287.5" stroke="#8a8a8a" stroke-width="1" /><line x1="1004.5" y1="308" x2="1008" y2="308" stroke="#8a8a8a" stroke-width="1" /><line x1="1004.5" y1="328.2" x2="1008" y2="328.2" stroke="#8a8a8a" stroke-width="1" /><line x1="1004.5" y1="348.4" x2="1008" y2="348.4" stroke="#8a8a8a" stroke-width="1" /><line x1="1004.5" y1="369.2" x2="1008" y2="369.2" stroke="#8a8a8a" stroke-width="1" /><line x1="1004.5" y1="389.3" x2="1008" y2="389.3" stroke="#8a8a8a" stroke-width="1" /><line x1="1004.5" y1="410" x2="1008" y2="410" stroke="#8a8a8a" stroke-width="1" /><line x1="1004.5" y1="430.2" x2="1008" y2="430.2" stroke="#8a8a8a" stroke-width="1" /><line x1="872.6" y1="446" x2="872.6" y2="449.5" stroke="#8a8a8a" stroke-width="1" /><text x="872.6" y="467.2" font-size="9" text-anchor="middle" fill="#000" font-weight="normal">-2000</text><line x1="938.5500000000001" y1="446" x2="938.5500000000001" y2="449.5" stroke="#8a8a8a" stroke-width="1" /><text x="938.6" y="467.2" font-size="9" text-anchor="middle" fill="#000" font-weight="normal">-1000</text><line x1="1004.5" y1="446" x2="1004.5" y2="449.5" stroke="#8a8a8a" stroke-width="1" /><text x="1004.5" y="467.2" font-size="9" text-anchor="middle" fill="#000" font-weight="normal">0</text><line x1="1070.45" y1="446" x2="1070.45" y2="449.5" stroke="#8a8a8a" stroke-width="1" /><text x="1070.5" y="467.2" font-size="9" text-anchor="middle" fill="#000" font-weight="normal">1000</text><line x1="1136.4" y1="446" x2="1136.4" y2="449.5" stroke="#8a8a8a" stroke-width="1" /><text x="1136.4" y="467.2" font-size="9" text-anchor="middle" fill="#000" font-weight="normal">2000</text><polyline points="872.6,414.6 880.0,421.5 886.2,427.0 893.0,431.8 898.0,435.2 902.0,436.2 906.0,435.0 916.9,429.5 926.0,423.2 932.9,419.4 938.0,417.8 943.8,417.1 956.8,426.2 971.1,426.2 973.4,424.4 978.1,409.7 984.6,394.5 1000.8,267.9 1013.8,332.8 1027.8,384.7 1031.7,378.2 1039.2,348.0 1043.7,344.2 1057.7,402.6 1061.0,413.5 1066.0,420.0 1071.4,425.5 1078.1,429.0 1083.0,430.3 1088.0,430.3 1103.6,422.3 1107.7,420.9 1126.4,411.0 1129.5,407.5 1136.4,398.4" fill="none" stroke="#111" stroke-width="1.1" stroke-linejoin="round" /></svg>
</body></html>
